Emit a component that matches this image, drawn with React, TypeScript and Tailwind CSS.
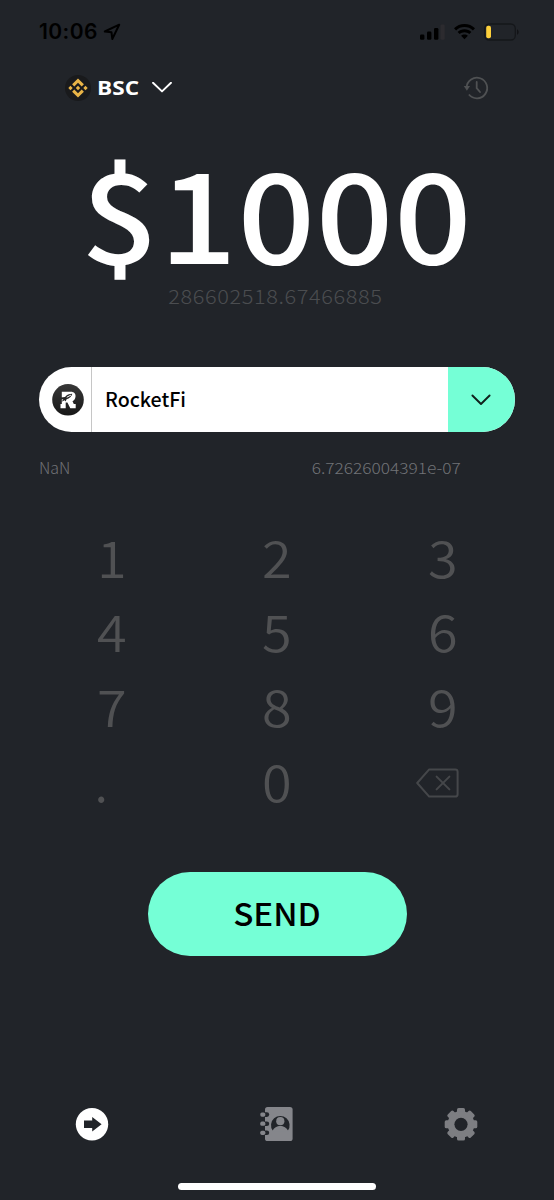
import { useState } from "react";

const KEYS = ["1", "2", "3", "4", "5", "6", "7", "8", "9", ".", "0", "del"];

function StatusBar() {
  return (
    <div className="flex h-16 items-center justify-between pl-[39px] pr-[35px] text-black">
      <div className="flex items-center gap-[5px]">
        <span className="font-['Inter',sans-serif] text-[21px] font-semibold leading-6 tracking-[0.4px]">
          10:06
        </span>
        <svg className="h-[18px] w-[18px]" viewBox="0 0 18 18" fill="none">
          <path
            d="M16.2 1.7 L1.8 8.5 L8.5 9.3 L9.3 16 Z"
            stroke="currentColor"
            strokeWidth="2"
            strokeLinejoin="round"
          />
        </svg>
      </div>
      <div className="flex items-center">
        <svg className="h-4 w-[25px]" viewBox="0 0 25 16">
          <rect x="0" y="10.5" width="4.4" height="5.3" rx="1.3" />
          <rect x="7" y="7.5" width="4.4" height="8.3" rx="1.3" />
          <rect x="14" y="4" width="4.4" height="11.8" rx="1.3" />
          <rect x="20.5" y="0.5" width="4.2" height="15.3" rx="1.3" fill="#2c2b2f" />
        </svg>
        <svg className="ml-[9px] h-4 w-[21px]" viewBox="0 0 21 16">
          <path d="M10.5 0C6.4 0 2.8 1.6 0 4.2L2.1 6.4C4.3 4.3 7.3 3.1 10.5 3.1S16.7 4.3 18.9 6.4L21 4.2C18.2 1.6 14.6 0 10.5 0Z" />
          <path d="M10.5 5.3C7.8 5.3 5.4 6.3 3.6 7.9L5.7 10.1C7 9 8.7 8.3 10.5 8.3S14 9 15.3 10.1L17.4 7.9C15.6 6.3 13.2 5.3 10.5 5.3Z" />
          <path d="M10.5 10.5C9.2 10.5 8 11 7.1 11.7L10.5 15.3L13.9 11.7C13 11 11.8 10.5 10.5 10.5Z" />
        </svg>
        <svg className="ml-[9px] h-[18px] w-[35px]" viewBox="0 0 35 18" fill="none">
          <rect x="0.7" y="1" width="30.6" height="16" rx="4.5" stroke="#15171a" strokeWidth="1.3" />
          <rect x="2.2" y="2.8" width="4.8" height="12.4" rx="2" fill="#fdd03b" />
          <path d="M33 6.2C35.2 7.2 35.2 10.8 33 11.8Z" fill="#121316" />
        </svg>
      </div>
    </div>
  );
}

function BnbLogo() {
  return (
    <svg className="h-[26px] w-[26px]" viewBox="0 0 26 26">
      <circle cx="13" cy="13" r="13" fill="#191a1c" />
      <g fill="#e9b447">
        <path d="M13 3.4 L18.9 9.3 L16.7 11.5 L13 7.8 L9.3 11.5 L7.1 9.3Z" />
        <path d="M13 22.6 L18.9 16.7 L16.7 14.5 L13 18.2 L9.3 14.5 L7.1 16.7Z" />
        <path d="M5.5 10.8 L7.7 13 L5.5 15.2 L3.3 13Z" />
        <path d="M20.5 10.8 L22.7 13 L20.5 15.2 L18.3 13Z" />
        <path d="M13 10.8 L15.2 13 L13 15.2 L10.8 13Z" />
      </g>
    </svg>
  );
}

function HistoryIcon() {
  return (
    <svg className="h-6 w-6 overflow-visible text-[#4f5153]" viewBox="0 0 24 24" fill="none" stroke="currentColor" strokeWidth="1.8">
      <path d="M2.6 11.5a10.3 10.3 0 1 1 2.3 7" />
      <path d="M12.7 6v6.1l3.3 3.9" strokeLinecap="round" />
      <path d="M-0.2 10h6.2l-3.1 4.8z" fill="currentColor" stroke="none" />
    </svg>
  );
}

function RocketLogo() {
  return (
    <svg className="h-8 w-8" viewBox="0 0 32 32">
      <defs>
        <linearGradient id="coin" x1="0" y1="0" x2="0" y2="1">
          <stop offset="0" stopColor="#383838" />
          <stop offset="1" stopColor="#171717" />
        </linearGradient>
      </defs>
      <circle cx="16" cy="15.8" r="15.8" fill="url(#coin)" />
      <path
        d="M9.8 7.8H18.5c4 0 5.300 2.200 5 5c-.3 2.300-1.300 3.600-3 4.400l1.300 2.800h1.900v4.200h-5.400l-2.900-5.800h-1.700v5.800H8.500v-4.200h1.300z"
        fill="#fff"
      />
      <path
        d="M20.300 9.800c-3.300 0-5.500 1.100-7.300 3.200l-4 .5v2l2.400-.3l-1.900 2.600l3.200-1.600l.9 1.300l1-2.200c2.800-.9 4.900-2.600 5.700-5.500z"
        fill="#252525"
      />
      <path d="M18.700 11.200l-3.600 1.900" stroke="#fff" strokeWidth="1" strokeLinecap="round" />
    </svg>
  );
}

function BackspaceIcon() {
  return (
    <svg
      className="mr-[9px] mt-[7px] h-[30px] w-[43px] text-[#45474a]"
      viewBox="0 0 43 30"
      fill="none"
      stroke="currentColor"
      strokeWidth="2"
      strokeLinejoin="round"
      strokeLinecap="round"
    >
      <path d="M13.2 1.4H39.2Q41.6 1.4 41.6 3.8V26.2Q41.6 28.6 39.2 28.6H13.2L1.2 15Z" />
      <path d="M20.6 8.6L33.4 21.4M33.4 8.6L20.6 21.4" />
    </svg>
  );
}

function BottomNav() {
  return (
    <nav className="mt-[150px] flex h-9 items-center justify-between pl-[75px] pr-[76px]">
      <button type="button" aria-label="Send">
        <svg className="h-[34px] w-[34px]" viewBox="0 0 34 34">
          <circle cx="17" cy="17.3" r="16.2" fill="#fff" />
          <path d="M9 13.4h8.2V10L26.6 17.3l-9.4 7.3v-3.5H9z" fill="#212429" />
        </svg>
      </button>
      <button type="button" aria-label="Contacts" className="text-[#85868b]">
        <svg className="h-[34px] w-[34px]" viewBox="0 0 34 34">
          <rect x="5" y="0" width="27.6" height="34" rx="2.6" fill="currentColor" />
          {[7.6, 16.7, 25.8].map((y) => (
            <g key={y}>
              <rect x="3" y={y - 2.3} width="6.2" height="4.6" rx="2.300" fill="#212429" />
              <rect x="0.3" y={y - 2.100} width="5" height="4.200" rx="1.600" fill="currentColor" />
            </g>
          ))}
          {/* Portrait: dark disc, then head and shoulders on top of it */}
          <path d="M12.700 23.600A9.300 9.300 0 1 1 27.900 23.600Z" fill="#212429" />
          <circle cx="20.300" cy="14.200" r="4.100" fill="currentColor" />
          <path d="M12.300 24.200C14 20.300 17 18.900 20.300 18.900S26.600 20.300 28.300 24.200Z" fill="currentColor" />
        </svg>
      </button>
      <button type="button" aria-label="Settings" className="text-[#7d7e82]">
        <svg className="h-[34px] w-[34px]" viewBox="0 0 34 34" fill="currentColor">
          {[0, 45, 90, 135].map((deg) => (
            <rect key={deg} x="13" y="1" width="8" height="32.6" rx="1.6" transform={`rotate(${deg} 17 17.3)`} />
          ))}
          <circle cx="17" cy="17.3" r="13.4" />
          <circle cx="17" cy="17.3" r="6.6" fill="#212429" />
        </svg>
      </button>
    </nav>
  );
}

export default function App() {
  const [amount, setAmount] = useState("1000");

  const handleKey = (key: string) => {
    setAmount((prev) => (key === "del" ? prev.slice(0, -1) : prev + key));
  };

  return (
    <div className="flex h-[1200px] w-[554px] flex-col overflow-hidden bg-[#212429] font-['Noto_Sans_CJK_JP',sans-serif]">
      <StatusBar />

      {/* Network selector */}
      <header className="flex h-12 items-center justify-between pl-[65px] pr-[66px]">
        <button type="button" className="flex items-center text-white">
          <BnbLogo />
          <span className="ml-[6px] w-10 origin-left scale-x-[1.13] whitespace-nowrap text-left font-['Open_Sans',sans-serif] text-[20px] font-bold leading-6">
            BSC
          </span>
          <svg className="ml-[15px] h-3 w-5" viewBox="0 0 20 12" fill="none">
            <path d="M1 0.8L10 9.4L19 0.8" stroke="currentColor" strokeWidth="1.9" strokeLinecap="round" strokeLinejoin="round" />
          </svg>
        </button>
        <HistoryIcon />
      </header>

      {/* Amount */}
      <div className="mt-[34px] flex flex-col items-center">
        <div className="h-32 scale-x-[1.09] whitespace-nowrap text-[125px] font-medium leading-[128px] tracking-[0.6px] text-white">
          ${amount}
        </div>
        <div className="mr-1 mt-2 scale-x-[1.1] text-[19.8px] font-light leading-7 tracking-[0.55px] text-[#4b4d50]">
          286602518.67466885
        </div>
      </div>

      {/* Token picker */}
      <div className="mx-[39px] mt-[57px] flex h-[65px] overflow-hidden rounded-full bg-white">
        <div className="flex w-[53px] items-center justify-end border-r border-[#c6c6c6] pr-[7px]">
          <RocketLogo />
        </div>
        <div className="flex flex-1 items-center pb-[2px] pl-[13px] text-[19.6px] font-medium text-black">
          RocketFi
        </div>
        <button type="button" className="flex w-[67px] items-center justify-center bg-[#75ffd6] pr-[2px]">
          <svg className="h-3 w-5" viewBox="0 0 20 12" fill="none">
            <path d="M1.4 1.5L10 10L18.6 1.5" stroke="#10211c" strokeWidth="1.9" strokeLinecap="round" strokeLinejoin="round" />
          </svg>
        </button>
      </div>

      <div className="mt-[23px] flex h-6 justify-between pl-[39px] pr-[93px] text-[15.5px] font-light leading-6 text-[#717377]">
        <span className="origin-left scale-x-[1.03]">NaN</span>
        <span className="origin-right scale-x-[1.115]">6.72626004391e-07</span>
      </div>

      {/* Keypad */}
      <div className="mx-[29px] mt-[38px] grid grid-cols-3">
        {KEYS.map((key) => (
          <button
            key={key}
            type="button"
            onClick={() => handleKey(key)}
            className="flex h-[74.6px] items-center justify-center pt-[3px] text-[50px] font-[350] leading-[74px] text-[#505153]"
          >
            {key === "del" ? (
              <BackspaceIcon />
            ) : (
              <span className={key === "." ? "mr-[21px]" : "scale-x-[1.08]"}>{key}</span>
            )}
          </button>
        ))}
      </div>

      <button
        type="button"
        className="mx-auto mt-[57px] h-[84px] w-[259px] shrink-0 rounded-full bg-[#75ffd6] pb-[3px] text-[31px] font-medium text-black"
      >
        <span className="inline-block scale-x-[1.07]">SEND</span>
      </button>

      <BottomNav />

      <div className="mx-auto mt-[41px] h-[7px] w-[198px] shrink-0 rounded-full bg-white" />
    </div>
  );
}
